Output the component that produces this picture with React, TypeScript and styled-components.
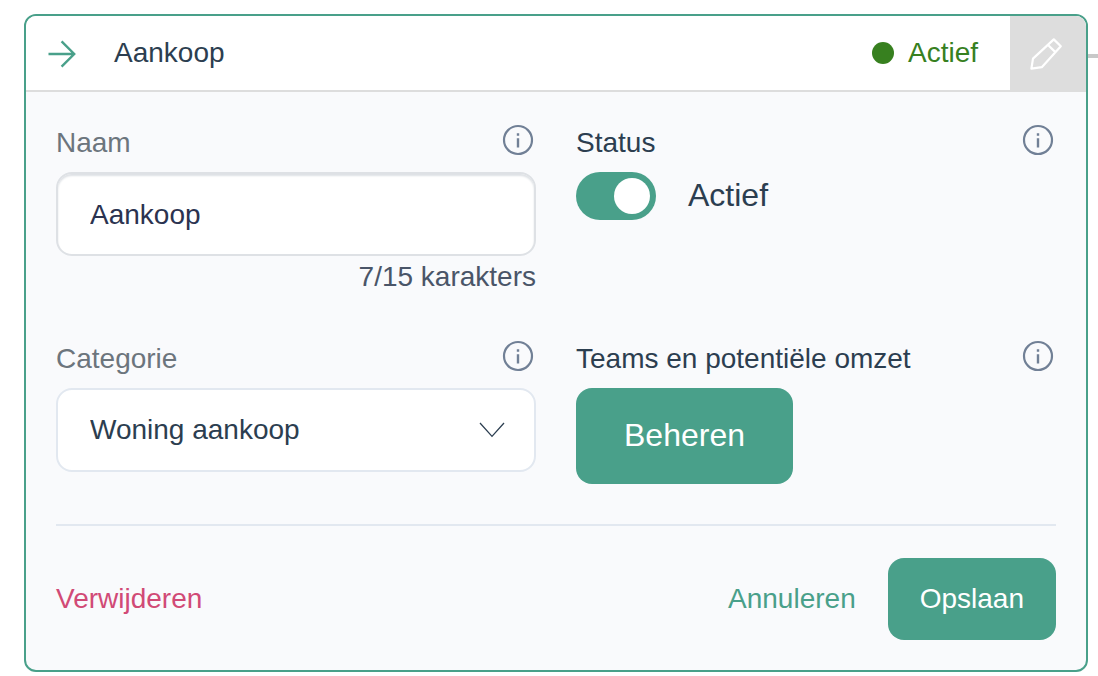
import React, { useState } from "react";
import styled, { createGlobalStyle } from "styled-components";

const GlobalStyle = createGlobalStyle`
  *, *::before, *::after { box-sizing: border-box; }
  body {
    margin: 0;
    background: #fff;
    color: #2c3e50;
    font-family: "Liberation Sans", Arial, Helvetica, sans-serif;
    font-size: 28px;
    line-height: 36px;
  }
  button, input, select { margin: 0; font: inherit; }
  button { cursor: pointer; }
`;

const Page = styled.main`
  display: flex;
  align-items: flex-start;
  padding: 14px 0 4px 24px;
`;

const Card = styled.form`
  flex: 1;
  min-width: 0;
  overflow: hidden;
  border: 2px solid #49a08a;
  border-radius: 12px;
  background: #f9fafc;
`;

const Connector = styled.div`
  width: 10px;
  height: 4px;
  margin-top: 40px;
  background: #c8c8c8;
`;

const Header = styled.header`
  display: flex;
  background: #fff;
`;

const HeaderMain = styled.div`
  flex: 1;
  display: flex;
  align-items: center;
  padding: 0 32px 0 22px;
  border-bottom: 2px solid #ddd;
`;

const Title = styled.h1`
  flex: 1;
  margin: 0 0 0 38px;
  font-size: 28px;
  font-weight: 400;
`;

const StatusBadge = styled.span`
  display: flex;
  align-items: center;
  gap: 14px;
  color: #37801f;

  &::before {
    content: "";
    width: 22px;
    height: 22px;
    border-radius: 50%;
    background: currentColor;
  }
`;

const EditButton = styled.button`
  display: flex;
  align-items: center;
  justify-content: center;
  width: 76px;
  height: 76px;
  padding: 0 4px 0 0;
  border: 0;
  background: #ddd;
  color: #fff;
`;

const Body = styled.div`
  padding: 32px 30px 30px;
`;

const Fields = styled.div`
  display: grid;
  grid-template-columns: 1fr 1fr;
  gap: 42px 40px;
`;

const Field = styled.div`
  display: flex;
  flex-direction: column;
  align-items: flex-start;
`;

const LabelRow = styled.div`
  display: flex;
  justify-content: space-between;
  align-items: flex-start;
  width: 100%;
  height: 48px;
  padding-right: 2px;
`;

const Label = styled.label<{ $muted?: boolean }>`
  line-height: 38px;
  color: ${(p) => (p.$muted ? "#6c757d" : "#2c3e50")};
`;

const InfoButton = styled.button`
  display: flex;
  padding: 0;
  border: 0;
  background: none;
  color: #718096;
`;

const TextInput = styled.input`
  width: 100%;
  height: 84px;
  padding: 2px 32px 0;
  border: 2px solid #dee1e5;
  border-radius: 16px;
  background: #fff;
  box-shadow: inset 0 2px 2px #dee1e5;
  color: #2b3350;
`;

const Counter = styled.span`
  align-self: flex-end;
  line-height: 42px;
  color: #4a5568;
`;

const SelectWrap = styled.div`
  position: relative;
  width: 100%;

  svg {
    position: absolute;
    top: 34px;
    right: 31px;
    pointer-events: none;
  }
`;

const Select = styled.select`
  display: block;
  appearance: none;
  width: 100%;
  height: 84px;
  padding: 0 72px 0 32px;
  border: 2px solid #e2e8f0;
  border-radius: 16px;
  background: #fff;
  color: #2c3e50;
`;

const ToggleRow = styled.div`
  display: flex;
  gap: 32px;
  font-size: 32px;
  line-height: 46px;
`;

const Toggle = styled.input`
  appearance: none;
  display: flex;
  justify-content: flex-start;
  width: 80px;
  height: 48px;
  padding: 6px;
  border-radius: 24px;
  background: #cbd5e0;
  cursor: pointer;

  &:checked {
    justify-content: flex-end;
    background: #49a08a;
  }

  &::before {
    content: "";
    width: 36px;
    height: 36px;
    border-radius: 50%;
    background: #fff;
  }
`;

const PrimaryButton = styled.button<{ $large?: boolean }>`
  height: ${(p) => (p.$large ? 96 : 82)}px;
  padding: ${(p) => (p.$large ? "0 48px 2px" : "0 32px")};
  border: 0;
  border-radius: 16px;
  background: #49a08a;
  color: #fff;
  font-size: ${(p) => (p.$large ? 32 : 28)}px;
`;

const TextButton = styled.button<{ $danger?: boolean }>`
  padding: 0;
  border: 0;
  background: none;
  color: ${(p) => (p.$danger ? "#d14a76" : "#49a08a")};
`;

const Footer = styled.footer`
  display: flex;
  align-items: center;
  justify-content: space-between;
  margin-top: 40px;
  padding-top: 32px;
  border-top: 2px solid #e2e8f0;
`;

const Actions = styled.div`
  display: flex;
  align-items: center;
  gap: 32px;
`;

const ArrowIcon = () => (
  <svg width="28" height="30" viewBox="0 0 28 30" fill="none" stroke="#49a08a" strokeWidth="2.4" aria-hidden="true">
    <path d="M.5 16H26.4M13.6 3.4L26.2 16L13.6 28.6" />
  </svg>
);

const PencilIcon = () => (
  <svg width="34" height="34" viewBox="0 0 34 34" fill="none" stroke="currentColor" strokeWidth="2.2" strokeLinejoin="round" aria-hidden="true">
    <path d="M24.8 2.4L31.8 9.3L12.8 30.2L2.4 31.6L4 21.6ZM18.8 7.8L26.6 15.4" />
  </svg>
);

const ChevronIcon = () => (
  <svg width="26" height="16" viewBox="0 0 26 16" fill="none" stroke="#2c3e50" strokeWidth="1.3" aria-hidden="true">
    <path d="M1 1L13 14.4L25 1" />
  </svg>
);

const Info = ({ about }: { about: string }) => (
  <InfoButton type="button" aria-label={`Informatie over ${about}`}>
    <svg width="32" height="32" viewBox="0 0 32 32" fill="none" stroke="currentColor" strokeWidth="2.2" aria-hidden="true">
      <circle cx="16" cy="16" r="14" />
      <path d="M16 14.2V23.6M16 9.3V11.7" strokeWidth="2.4" />
    </svg>
  </InfoButton>
);

export default function App() {
  const [name, setName] = useState("Aankoop");
  const [active, setActive] = useState(true);
  const status = active ? "Actief" : "Inactief";

  return (
    <>
      <GlobalStyle />
      <Page>
        <Card onSubmit={(e) => e.preventDefault()}>
          <Header>
            <HeaderMain>
              <ArrowIcon />
              <Title>Aankoop</Title>
              <StatusBadge>{status}</StatusBadge>
            </HeaderMain>
            <EditButton type="button" aria-label="Bewerken">
              <PencilIcon />
            </EditButton>
          </Header>
          <Body>
            <Fields>
              <Field>
                <LabelRow>
                  <Label $muted htmlFor="naam">Naam</Label>
                  <Info about="naam" />
                </LabelRow>
                <TextInput id="naam" type="text" maxLength={15} value={name} onChange={(e) => setName(e.target.value)} />
                <Counter>{`${name.length}/15 karakters`}</Counter>
              </Field>
              <Field>
                <LabelRow>
                  <Label htmlFor="status">Status</Label>
                  <Info about="status" />
                </LabelRow>
                <ToggleRow>
                  <Toggle id="status" type="checkbox" role="switch" checked={active} onChange={(e) => setActive(e.target.checked)} />
                  <span>{status}</span>
                </ToggleRow>
              </Field>
              <Field>
                <LabelRow>
                  <Label $muted htmlFor="categorie">Categorie</Label>
                  <Info about="categorie" />
                </LabelRow>
                <SelectWrap>
                  <Select id="categorie" defaultValue="aankoop">
                    <option value="aankoop">Woning aankoop</option>
                  </Select>
                  <ChevronIcon />
                </SelectWrap>
              </Field>
              <Field>
                <LabelRow>
                  <Label htmlFor="teams">Teams en potentiële omzet</Label>
                  <Info about="teams en potentiële omzet" />
                </LabelRow>
                <PrimaryButton $large id="teams" type="button">Beheren</PrimaryButton>
              </Field>
            </Fields>
            <Footer>
              <TextButton $danger type="button">Verwijderen</TextButton>
              <Actions>
                <TextButton type="button">Annuleren</TextButton>
                <PrimaryButton type="submit">Opslaan</PrimaryButton>
              </Actions>
            </Footer>
          </Body>
        </Card>
        <Connector />
      </Page>
    </>
  );
}
